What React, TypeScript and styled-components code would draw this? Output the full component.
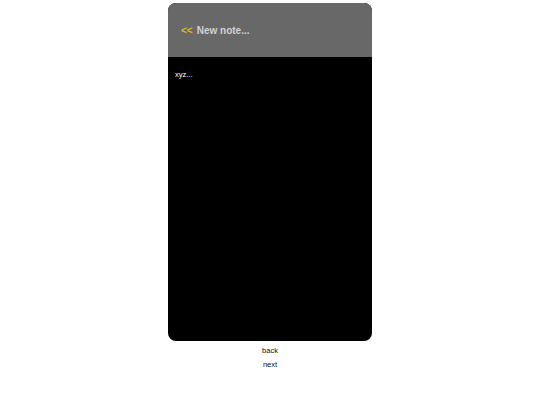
import React from "react";
import styled, { createGlobalStyle } from "styled-components";

const GlobalStyle = createGlobalStyle`
  body {
    margin: 0;
    background: #fff;
    font-family: "Liberation Sans", Arial, sans-serif;
  }
`;

export default function App() {
  return (
    <Page>
      <GlobalStyle />
      <Phone>
        <Header>
          <BackArrow>&lt;&lt;</BackArrow>
          <Title>New note...</Title>
        </Header>
        <NoteBody>xyz...</NoteBody>
      </Phone>
      <NavList>
        <NavItem>back</NavItem>
        <NavItem>next</NavItem>
      </NavList>
    </Page>
  );
}

const Page = styled.div`
  display: flex;
  flex-direction: column;
  align-items: center;
  padding-top: 3px;
`;

const Phone = styled.div`
  width: 204px;
  height: 338px;
  border-radius: 8px;
  overflow: hidden;
  background: #000;
  display: flex;
  flex-direction: column;
`;

const Header = styled.div`
  height: 54px;
  flex-shrink: 0;
  background: #686868;
  display: flex;
  align-items: center;
  gap: 4px;
  padding-left: 13px;
  font-size: 10px;
  font-weight: bold;
`;

const BackArrow = styled.span`
  color: #d8bd12;
`;

const Title = styled.span`
  color: #d2d2d2;
`;

const NoteBody = styled.div`
  padding: 13px 7px;
  color: #fff;
  font-size: 7.5px;
`;

const NavList = styled.div`
  display: flex;
  flex-direction: column;
  align-items: center;
  padding-top: 3px;
`;

const NavItem = styled.div`
  font-size: 7.5px;
  line-height: 14px;
  color: #111;
`;
